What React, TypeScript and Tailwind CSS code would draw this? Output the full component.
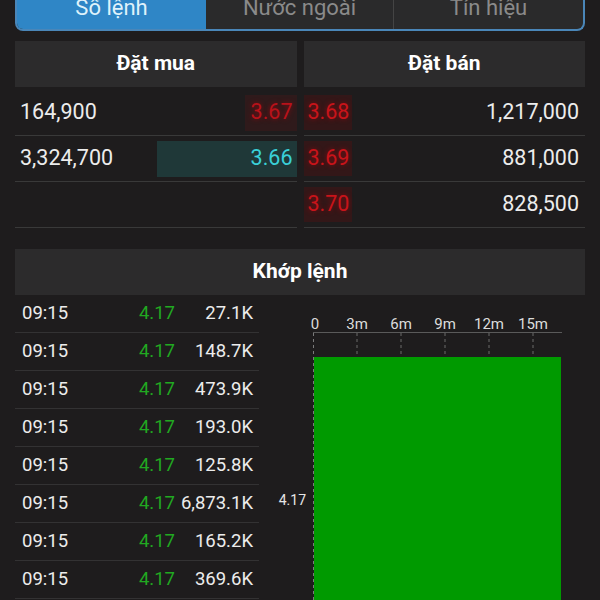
import clsx from 'clsx'

const buys = [
  { vol: '164,900', price: '3.67', tone: 'red' },
  { vol: '3,324,700', price: '3.66', tone: 'teal' },
  { vol: '', price: '', tone: '' },
]

const sells = [
  { price: '3.68', vol: '1,217,000' },
  { price: '3.69', vol: '881,000' },
  { price: '3.70', vol: '828,500' },
]

const trades = ['27.1K', '148.7K', '473.9K', '193.0K', '125.8K', '6,873.1K', '165.2K', '369.6K']

const ticks = [
  { x: 56, label: '0' },
  { x: 98, label: '3m' },
  { x: 142, label: '6m' },
  { x: 186, label: '9m' },
  { x: 230, label: '12m' },
  { x: 274, label: '15m' },
]

function Chart() {
  return (
    <svg width="325" height="310" className="block">
      {ticks.map((t) => (
        <text key={t.label} x={t.x} y="34" fill="#dcdcdc" fontSize="15" textAnchor="middle" fontFamily="Roboto, sans-serif">
          {t.label}
        </text>
      ))}
      <line x1="54" y1="37.5" x2="303" y2="37.5" stroke="#5a5a5a" strokeWidth="1" />
      {ticks.slice(1).map((t) => (
        <line key={t.x} x1={t.x} y1="38" x2={t.x} y2="62" stroke="#6a6a6a" strokeWidth="1" strokeDasharray="3 3" />
      ))}
      <rect x="55" y="62" width="247" height="250" fill="#009a00" />
      <line x1="54.5" y1="38" x2="54.5" y2="310" stroke="#7a7a7a" strokeWidth="1" strokeDasharray="3 3" />
      <text x="47" y="210" fill="#e6e6e6" fontSize="14" textAnchor="end" fontFamily="Roboto, sans-serif">
        4.17
      </text>
    </svg>
  )
}

export default function App() {
  return (
    <div className="h-[600px] w-[600px] overflow-hidden bg-[#1e1c1d] px-[15px] font-['Roboto',sans-serif] text-white">
      {/* tabs */}
      <div className="mt-[-16px] flex h-[47px] overflow-hidden rounded-b-[8px] border-2 border-t-0 border-[#4a86b8] bg-[#2a2a2b] text-[22px]">
        <div className="flex w-[189px] items-center justify-center bg-[#2f86c6] pt-[2px] text-[#dff2fb]">Sổ lệnh</div>
        <div className="flex flex-1 items-center justify-center border-r border-[#444] pt-[2px] text-[#8a8a8a]">Nước ngoài</div>
        <div className="flex w-[189px] items-center justify-center pt-[2px] text-[#8a8a8a]">Tín hiệu</div>
      </div>

      {/* order book */}
      <div className="mt-[10px] grid grid-cols-2 gap-x-[7px]">
        <div className="flex h-[46px] items-center justify-center bg-[#2c2b2c] text-[21px] font-bold">Đặt mua</div>
        <div className="flex h-[46px] items-center justify-center bg-[#2c2b2c] text-[21px] font-bold">Đặt bán</div>
      </div>
      <div className="mt-[3px] grid grid-cols-2 gap-x-[7px]">
        <div>
          {buys.map((b, i) => (
            <div key={i} className="flex h-[46px] items-center justify-between border-b border-[#393939] pl-[5px] text-[21.5px]">
              <span className="text-[#ececec]">{b.vol}</span>
              {b.price && (
                <span
                  className={clsx(
                    'flex h-[36px] items-center justify-end pr-[4px]',
                    b.tone === 'red' && 'w-[52px] bg-[#2f1a1b] text-[#b8121a] [text-shadow:0_0_5px_#8a0a10]',
                    b.tone === 'teal' && 'w-[140px] bg-[#1f3838] text-[#3ad0d8]'
                  )}
                >
                  {b.price}
                </span>
              )}
            </div>
          ))}
        </div>
        <div>
          {sells.map((s) => (
            <div key={s.price} className="flex h-[46px] items-center justify-between border-b border-[#393939] pr-[6px] text-[21.5px]">
              <span className="flex h-[35px] w-[48px] items-center pl-[4px] bg-[#331718] text-[#c8141a] [text-shadow:0_0_5px_#8a0a10]">
                {s.price}
              </span>
              <span className="text-[#ececec]">{s.vol}</span>
            </div>
          ))}
        </div>
      </div>

      {/* matched orders */}
      <div className="mt-[21px] flex h-[46px] items-center justify-center bg-[#2c2b2c] text-[21px] font-bold">Khớp lệnh</div>
      <div className="flex">
        <div className="w-[244px]">
          {trades.map((v, i) => (
            <div key={i} className="flex h-[38px] items-center border-b border-[#333233] pl-[7px] text-[18.5px]">
              <span className="w-[110px] text-[#ececec]">09:15</span>
              <span className="w-[43px] text-right text-[#21a821]">4.17</span>
              <span className="flex-1 pr-[6px] text-right text-[#ececec]">{v}</span>
            </div>
          ))}
        </div>
        <Chart />
      </div>
    </div>
  )
}
